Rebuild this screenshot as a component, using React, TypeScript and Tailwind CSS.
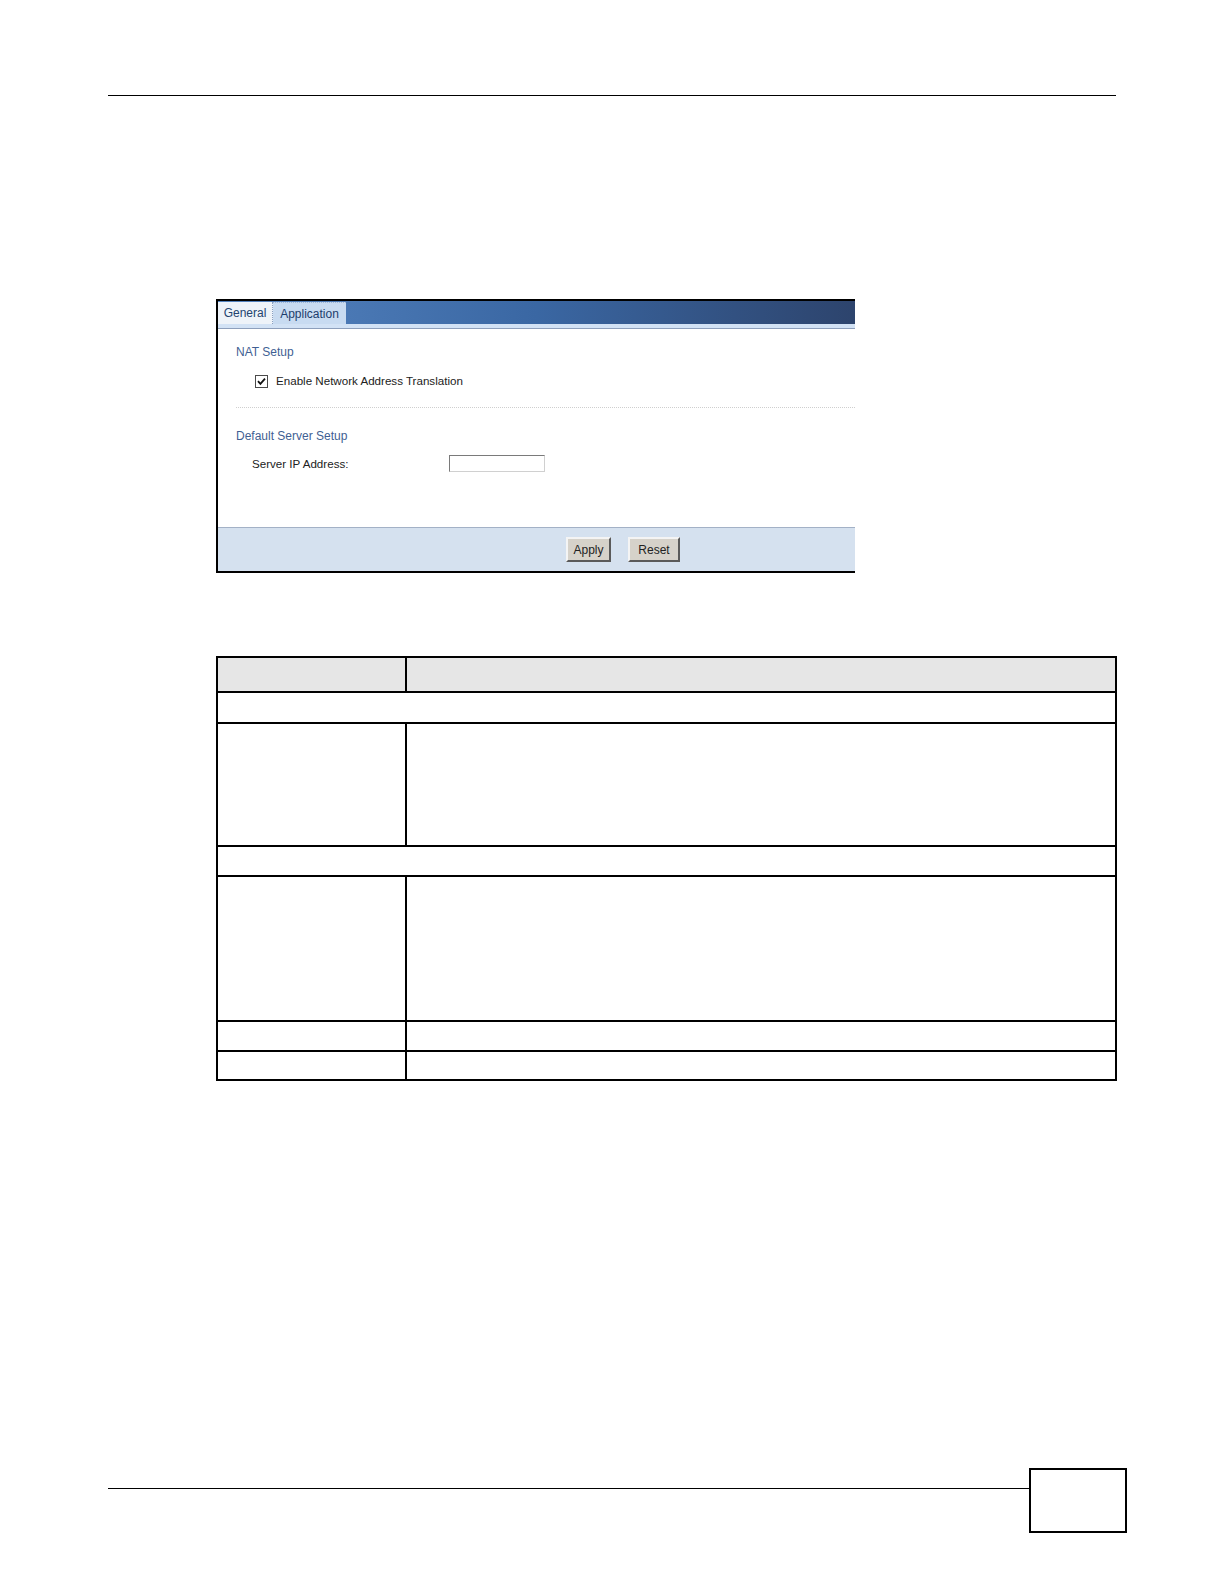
import React from "react";

const ROWS: { h: string; span?: boolean; head?: boolean }[] = [
  { h: "h-[35px]", head: true },
  { h: "h-[31px]", span: true },
  { h: "h-[123px]" },
  { h: "h-[30px]", span: true },
  { h: "h-[145px]" },
  { h: "h-[30px]" },
  { h: "h-[27px]" },
];

function CheckBox() {
  return (
    <span className="flex h-[13px] w-[13px] items-center justify-center border border-[#4a4a4a] bg-white">
      <svg width="9" height="9" viewBox="0 0 9 9">
        <path d="M1 4.2 L3.4 6.8 L8 1.6" fill="none" stroke="#111" strokeWidth="1.8" />
      </svg>
    </span>
  );
}

function NatScreen() {
  return (
    <div className="ml-[216px] mt-[203px] flex h-[274px] w-[639px] flex-col border-y-2 border-l-2 border-black bg-white">
      {/* tab bar */}
      <div className="flex h-[23px] items-end bg-gradient-to-r from-[#5584c0] via-[#3a67a3] to-[#2d446d]">
        <div className="flex h-[22px] w-[55px] items-center justify-center border-r border-dotted border-[#8aa0c0] bg-[#eef3f9] text-[12px] text-[#23436f]">
          General
        </div>
        <div className="flex h-[22px] w-[73px] items-center justify-center border-t border-dotted border-[#9fb6d6] bg-[#c8dbf1] text-[12px] text-[#1d3d6c]">
          Application
        </div>
      </div>
      <div className="h-[4px] bg-[#d2e2f5]" />
      <div className="h-px bg-[#8d9fbc]" />

      {/* content */}
      <div className="flex-1 pl-[18px] text-[12px] leading-[14px]">
        <div className="mt-[16px] text-[#3f5f93]">NAT Setup</div>
        <div className="ml-[19px] mt-[15px] flex h-[14px] items-center gap-[8px] text-[11.6px] text-[#222]">
          <CheckBox />
          <span>Enable Network Address Translation</span>
        </div>
        <div className="mt-[19px] border-t border-dotted border-[#cfcfcf]" />
        <div className="mt-[21px] text-[#3f5f93]">Default Server Setup</div>
        <div className="ml-[16px] mt-[12px] flex h-[17px] items-center text-[11.6px] text-[#222]">
          <span className="w-[197px]">Server IP Address:</span>
          <span className="h-[17px] w-[96px] border border-t-[#7a7a7a] border-l-[#7a7a7a] border-r-[#d0d0d0] border-b-[#d0d0d0] bg-white" />
        </div>
      </div>

      {/* footer buttons */}
      <div className="flex h-[44px] items-center gap-[17px] border-t border-[#a3b1c6] bg-[#d5e1ef] pl-[348px] text-[12px]">
        <button className="h-[25px] w-[45px] border-2 border-t-[#f4f4f4] border-l-[#f4f4f4] border-r-[#5a5a5a] border-b-[#5a5a5a] bg-[#d6d2ca] text-[#222]">
          Apply
        </button>
        <button className="h-[25px] w-[52px] border-2 border-t-[#f4f4f4] border-l-[#f4f4f4] border-r-[#5a5a5a] border-b-[#5a5a5a] bg-[#d6d2ca] text-[#222]">
          Reset
        </button>
      </div>
    </div>
  );
}

function FieldTable() {
  return (
    <div className="ml-[216px] mt-[83px] w-[901px] border-2 border-black">
      {ROWS.map((r, i) => (
        <div
          key={i}
          className={`flex ${r.h} ${i < ROWS.length - 1 ? "border-b-2 border-black" : ""} ${
            r.head ? "bg-[#e6e6e6]" : "bg-white"
          }`}
        >
          {r.span ? (
            <div className="flex-1" />
          ) : (
            <>
              <div className="w-[189px] border-r-2 border-black" />
              <div className="flex-1" />
            </>
          )}
        </div>
      ))}
    </div>
  );
}

export default function App() {
  return (
    <div className="relative h-[1584px] w-[1224px] bg-white font-['Liberation_Sans',Arial,sans-serif]">
      {/* running header */}
      <div className="px-[108px] pt-[95px]">
        <div className="h-px bg-black" />
      </div>

      <NatScreen />
      <FieldTable />

      {/* running footer */}
      <div className="mt-[387px] flex items-start pl-[108px] pr-[97px]">
        <div className="mt-[20px] h-px flex-1 bg-black" />
        <div className="h-[65px] w-[98px] border-2 border-black" />
      </div>
    </div>
  );
}
